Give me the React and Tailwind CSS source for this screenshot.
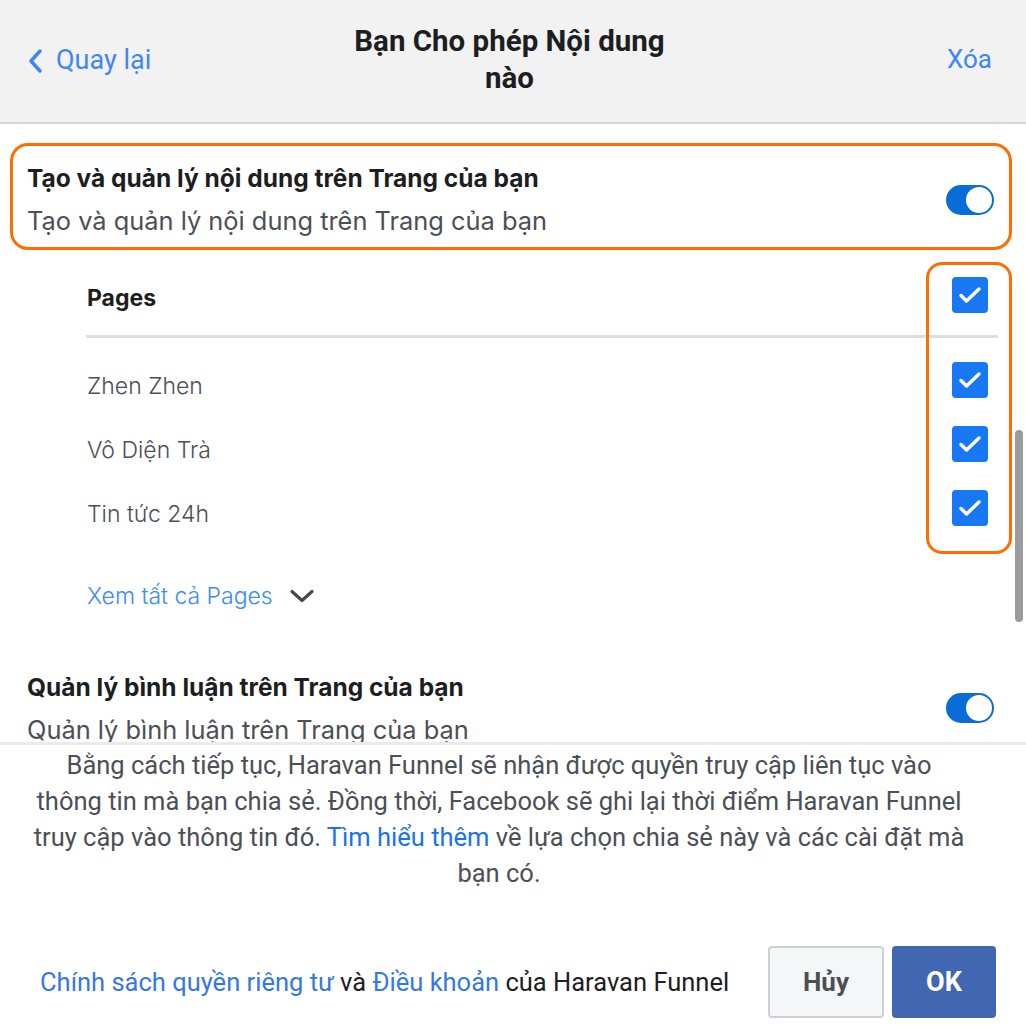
import React from "react";

function Toggle() {
	return (
		<div className="w-[48px] h-[30px] rounded-full bg-[#0a6cd6] flex items-center justify-end pr-[2px]">
			<div className="w-[26px] h-[26px] rounded-full bg-white" />
		</div>
	);
}

function Checkbox() {
	return (
		<div className="w-[36px] h-[36px] shrink-0 rounded-[4px] bg-[#1877f2] flex items-center justify-center">
			<svg width="28" height="28" viewBox="0 0 28 28" fill="none">
				<path d="M5 14.5l5.5 5.5L23 8" stroke="white" strokeWidth="3.5" strokeLinecap="round" strokeLinejoin="round" />
			</svg>
		</div>
	);
}

function PermissionRow({ title }) {
	return (
		<div className="flex items-center justify-between">
			<div>
				<p className="text-[24.5px] leading-[32px] font-bold text-[#1c1e21]">{title}</p>
				<p className="text-[25.4px] leading-[32px] mt-[11px] text-[#4b4f56]">{title}</p>
			</div>
			<Toggle />
		</div>
	);
}

const pages = ["Zhen Zhen", "Vô Diện Trà", "Tin tức 24h"];

export default function App() {
	return (
		<div className="w-[1026px] h-[1034px] bg-white flex flex-col overflow-hidden" style={{ fontFamily: "Inter, 'Noto Sans', sans-serif" }}>
			{/* Header */}
			<div className="h-[124px] shrink-0 bg-[#f2f2f2] border-b-[2px] border-[#d4d4d4] flex items-center justify-between pl-[27px] pr-[34px] font-['Roboto',sans-serif]">
				<div className="w-[220px] flex items-center gap-[11px] text-[#3f86f5] text-[27px]">
					<svg width="18" height="26" viewBox="0 0 18 26" fill="none">
						<path d="M13 3L4 13l9 10" stroke="#3f86f5" strokeWidth="3.5" strokeLinecap="round" strokeLinejoin="round" />
					</svg>
					<span className="-mt-[2px]">Quay lại</span>
				</div>
				<h1 className="w-[330px] text-center text-[29.5px] leading-[37px] font-bold text-[#1c1e21] -mt-[2px]">
					Bạn Cho phép Nội dung nào
				</h1>
				<div className="w-[220px] text-right text-[#3f86f5] text-[26px] -mt-[4px]">Xóa</div>
			</div>

			{/* Scroll area */}
			<div className="relative h-[618px] shrink-0 overflow-hidden">
				<div className="pt-[19px] pl-[10px] pr-[14px]">
					<div className="border-[3px] border-[#ff6d00] rounded-[18px] pl-[14px] pr-[15px] pt-[16px] pb-[10px]">
						<PermissionRow title="Tạo và quản lý nội dung trên Trang của bạn" />
					</div>
				</div>

				<div className="pl-[87px] pr-[28px] mt-[27px]">
					<div className="h-[36px] flex items-center justify-between pr-[10px]">
						<span className="text-[23px] leading-[36px] font-bold text-[#1c1e21] mt-[6px]">Pages</span>
						<Checkbox />
					</div>
					<div className="h-[3px] bg-[#dadde1] -ml-[1px] mt-[22px]" />
					<div className="flex flex-col gap-[28px] mt-[24px] pr-[10px]">
						{pages.map((p) => (
							<div key={p} className="h-[36px] flex items-center justify-between">
								<span className="text-[23px] leading-[36px] font-light text-[#4b4f56] mt-[12px]">{p}</span>
								<Checkbox />
							</div>
						))}
					</div>
					<div className="flex items-center gap-[16px] mt-[53px]">
						<span className="text-[23px] font-light text-[#3b8cf5]">Xem tất cả Pages</span>
						<svg width="26" height="16" viewBox="0 0 26 16" fill="none">
							<path d="M3 3.5l10 9 10-9" stroke="#444950" strokeWidth="3.2" strokeLinecap="round" strokeLinejoin="round" />
						</svg>
					</div>
				</div>

				<div className="pl-[27px] pr-[32px] mt-[57px]">
					<PermissionRow title="Quản lý bình luận trên Trang của bạn" />
				</div>

				{/* annotation around checkboxes */}
				<div className="absolute left-[926px] top-[138px] w-[86px] h-[292px] border-[3px] border-[#ff6d00] rounded-[16px]" />
				{/* scrollbar */}
				<div className="absolute left-[1015px] top-[306px] w-[8px] h-[192px] rounded-full bg-[#9b9b9b]" />
			</div>

			{/* Footer */}
			<div className="flex-1 border-t-[3px] border-[#ebebeb] font-['Roboto',sans-serif]">
				<p className="pl-[20px] pr-[48px] pt-[2px] text-center text-[25.5px] leading-[36px] text-[#4b4f56]">
					Bằng cách tiếp tục, Haravan Funnel sẽ nhận được quyền truy cập liên tục vào<br />
					thông tin mà bạn chia sẻ. Đồng thời, Facebook sẽ ghi lại thời điểm Haravan Funnel<br />
					truy cập vào thông tin đó. <span className="text-[#1a73e8]">Tìm hiểu thêm</span> về lựa chọn chia sẻ này và các cài đặt mà<br />
					bạn có.
				</p>
				<div className="flex items-center justify-between pl-[40px] pr-[30px] mt-[55px]">
					<p className="text-[25.5px] text-[#1c1e21]">
						<span className="text-[#3578e5]">Chính sách quyền riêng tư</span> và <span className="text-[#3578e5]">Điều khoản</span> của Haravan Funnel
					</p>
					<div className="flex gap-[8px]">
						<button className="w-[116px] h-[72px] rounded-[4px] border-[2px] border-[#ccd0d5] bg-[#f5f6f7] text-[26px] font-bold text-[#4b4f56]">Hủy</button>
						<button className="w-[104px] h-[72px] rounded-[4px] bg-[#4267b2] text-[27px] font-bold text-white">OK</button>
					</div>
				</div>
			</div>
		</div>
	);
}
